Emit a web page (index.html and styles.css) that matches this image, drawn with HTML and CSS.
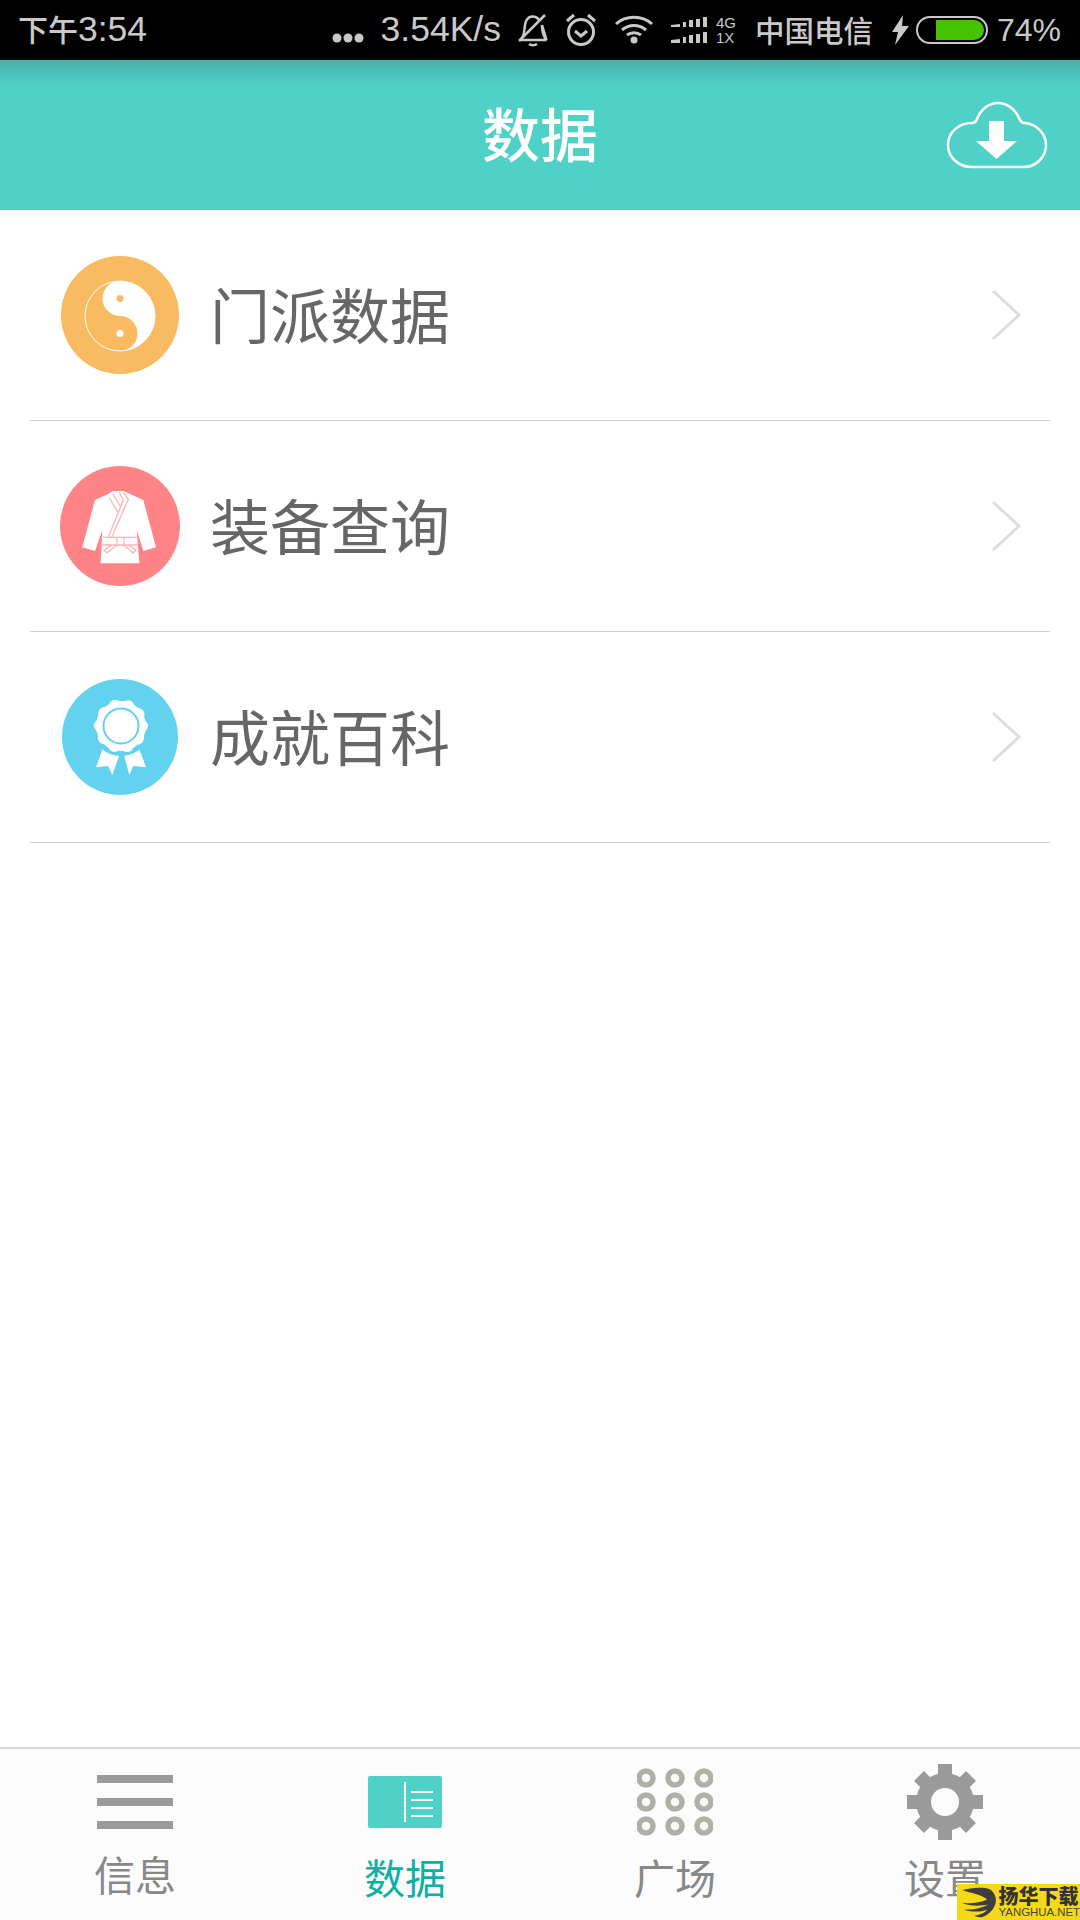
FILE: index.html
```html
<!DOCTYPE html>
<html lang="zh-CN">
<head>
    <meta charset="UTF-8">
    <meta name="viewport" content="width=device-width, initial-scale=1.0">
    <title>数据</title>
    <link rel="stylesheet" href="styles.css">
</head>
<body>

    <!-- 状态栏 -->
    <div class="status-bar">
        <span class="clock"><span class="clock-cn">下午</span>3:54</span>
        <div class="status-right">
            <svg class="st-dots" width="32" height="10" viewBox="0 0 32 10"><circle cx="5" cy="5" r="4.500"/><circle cx="16" cy="5" r="4.500"/><circle cx="27" cy="5" r="4.500"/></svg>
            <span class="speed">3.54K/s</span>
            <svg class="st-bell" width="32" height="34" viewBox="0 0 32 34"><path d="M3 27c3-2 4-5 4.500-11 .5-8 3-12.500 8-12.500 3 0 5 1 6.500 3.500M25 12c0 6 1 11 4.500 15zM3 27h26.500M12 31c2 1.500 6 1.500 8 0" fill="none" stroke-width="2.500"/><path d="M2 28 28 2" fill="none" stroke-width="2.500"/></svg>
            <svg class="st-alarm" width="32" height="34" viewBox="0 0 32 34"><circle cx="16" cy="19" r="12.500" fill="none"/><path d="M10 18l6 5 6-5M2 8l7-6M30 8l-7-6" fill="none"/></svg>
            <svg class="st-wifi" width="38" height="30" viewBox="0 0 38 30"><path d="M1 9c10-9 26-9 36 0M7 15c7-6 17-6 24 0M12 20c4-3 10-3 14 0" fill="none"/><circle class="solid" cx="19" cy="25" r="3.500"/></svg>
            <svg class="st-signal" width="37" height="28" viewBox="0 0 37 28"><path class="solid" d="M0 9l9-1v3H0zM12 6h3v5h-3zM18 4h4v7h-4zM25 3h4v8h-4zM32 1h4v10h-4zM0 24l9-1v4H0zM12 21h3v6h-3zM18 19h4v8h-4zM25 18h4v9h-4zM32 16h4v11h-4z"/></svg>
            <span class="net-type"><span>4G</span><span>1X</span></span>
            <span class="carrier">中国电信</span>
            <svg class="st-bolt" width="17" height="30" viewBox="0 0 17 30"><path class="solid" d="M11 0 0 17h6L3 30 17 11h-7z"/></svg>
            <span class="battery"><span class="battery-level"></span></span>
            <span class="percent">74%</span>
        </div>
    </div>

    <!-- 标题栏 -->
    <div class="header">
        <h1>数据</h1>
        <svg class="cloud" width="102" height="68" viewBox="0 0 102 68">
            <path d="M26 66C12 66 2 56 2 44c0-13 11-22 24-22 3 0 4-1 5-4C35 8 43 2 52 2c9 0 17 6 21 15 1 3 3 5 6 5 11 1 21 10 21 22 0 12-10 22-22 22z" fill="none" stroke="#fff" stroke-width="2.500"/>
            <path d="M43 20h15v20h13L50.500 58 30 40h13z" fill="#fff"/>
        </svg>
    </div>

    <!-- 列表 -->
    <div class="list">
        <div class="row">
            <svg class="row-icon" width="120" height="120" viewBox="0 0 120 120">
                <circle cx="60" cy="60" r="59" fill="#f9bb62"/>
                <circle cx="60" cy="61" r="35" fill="none" stroke="#fff" stroke-width="1"/>
                <path d="M60 26a17.500 17.500 0 0 0 0 35 17.500 17.500 0 0 1 0 35 35 35 0 0 0 0-70z" fill="#fff"/>
                <circle cx="60" cy="43.500" r="3.500" fill="#f9bb62"/>
                <circle cx="60" cy="78.500" r="3.500" fill="#fff"/>
            </svg>
            <span class="row-label">门派数据</span>
            <svg class="chevron" width="32" height="52" viewBox="0 0 32 52"><path d="M3 2l26 24L3 50" fill="none" stroke="#ddd" stroke-width="3"/></svg>
        </div>
        <div class="row">
            <svg class="row-icon" width="120" height="120" viewBox="0 0 120 120">
                <circle cx="60" cy="60" r="60" fill="#ff8488"/>
                <path d="M52.700 25h10.600l5 2.300L83.300 34 96 81.300 83.300 85l-6.600-21 2.600 33.300H40.700L42.300 64 35 85l-12.700-3.700L35 34l13.300-6z" fill="#fff"/>
                <path d="M63.300 26.300l5 7-16.600 38M59.300 26.300l4 7.700-15 37.300M49.300 31.700l9 15.600M52.700 28l8.300 13.300M43 71.300h34M42 79h36M57 71.300v8M64 71.300v8M57 79 47 87l-3-3 8-5M64 79l9 8 3-3-8-5" fill="none" stroke="#ffb4b6" stroke-width="1.300"/>
            </svg>
            <span class="row-label">装备查询</span>
            <svg class="chevron" width="32" height="52" viewBox="0 0 32 52"><path d="M3 2l26 24L3 50" fill="none" stroke="#ddd" stroke-width="3"/></svg>
        </div>
        <div class="row">
            <svg class="row-icon" width="120" height="120" viewBox="0 0 120 120">
                <circle cx="60" cy="60" r="58" fill="#62d2ee"/>
                <path d="M43.300 70.300 60 76.300 52.300 98l-4-9L36 90.300zM64 78l14.300-8.300L86 90.300 73.300 89l-4 9z" fill="#fff"/>
                <circle cx="61" cy="49" r="30" fill="#62d2ee"/>
                <circle cx="61" cy="49" r="20.500" fill="none" stroke="#fff" stroke-width="13" stroke-linecap="round" stroke-dasharray="0 12.880"/>
                <circle cx="61" cy="49" r="25" fill="#fff"/>
                <circle cx="61" cy="49" r="17.500" fill="#fff" stroke="#62d2ee" stroke-width="2"/>
            </svg>
            <span class="row-label">成就百科</span>
            <svg class="chevron" width="32" height="52" viewBox="0 0 32 52"><path d="M3 2l26 24L3 50" fill="none" stroke="#ddd" stroke-width="3"/></svg>
        </div>
    </div>

    <!-- 底部导航 -->
    <div class="tabs">
        <div class="tab tab-info">
            <span class="tab-icon">
                <svg width="76" height="54" viewBox="0 0 76 54"><path d="M0 0h76v8H0zM0 23h76v8H0zM0 46h76v8H0z" fill="#9a9a9a"/></svg>
            </span>
            <span class="tab-label">信息</span>
        </div>
        <div class="tab active">
            <span class="tab-icon">
                <svg width="74" height="52" viewBox="0 0 74 52"><rect width="74" height="52" rx="2" fill="#4fd1c8"/><path d="M37 6v40M43 16h22M43 24h22M43 32h22M43 40h22" stroke="#fff" stroke-width="2"/></svg>
            </span>
            <span class="tab-label">数据</span>
        </div>
        <div class="tab">
            <span class="tab-icon">
                <svg width="76" height="68" viewBox="0 0 76 68" fill="none" stroke="#afb0aa" stroke-width="5.500">
                    <circle cx="9" cy="10" r="7"/><circle cx="38" cy="10" r="7"/><circle cx="67" cy="10" r="7"/>
                    <circle cx="9" cy="34" r="7"/><circle cx="38" cy="34" r="7"/><circle cx="67" cy="34" r="7"/>
                    <circle cx="9" cy="58" r="7"/><circle cx="38" cy="58" r="7"/><circle cx="67" cy="58" r="7"/>
                </svg>
            </span>
            <span class="tab-label">广场</span>
        </div>
        <div class="tab">
            <span class="tab-icon">
                <svg width="76" height="76" viewBox="0 0 76 76">
                    <path d="M38 0v76M0 38h76M12 12l52 52M64 12 12 64" stroke="#9a9a9a" stroke-width="14"/>
                    <circle cx="38" cy="38" r="29" fill="#9a9a9a"/>
                    <circle cx="38" cy="38" r="14" fill="#fcfcfc"/>
                </svg>
            </span>
            <span class="tab-label">设置</span>
        </div>
    </div>

    <!-- 水印 -->
    <div class="watermark">
        <svg width="38" height="36" viewBox="0 0 44 36"><path d="M4 4c10-3 24-4 32-1 6 4 8 10 7 16-2 8-8 14-16 17-4 0-6-1-9-2 6-1 12-3 15-7-8 3-18 3-27 0 9 0 20-1 28-6-9 2-22 2-31-2 10 1 22 0 30-4C26 9 14 8 4 4z" fill="#3d3d42"/></svg>
        <div class="wm-text">
            <span class="wm-cn">扬华下载</span>
            <span class="wm-en">YANGHUA.NET</span>
        </div>
    </div>

</body>
</html>
```

FILE: styles.css
```css
* {
    box-sizing: border-box;
}

body {
    font-family: "Noto Sans CJK SC", "Noto Sans", sans-serif;
    background-color: #fff;
    margin: 0;
    padding: 0;
    width: 1080px;
    height: 1920px;
    display: flex;
    flex-direction: column;
    position: relative;
    overflow: hidden;
}

.status-bar {
    height: 60px;
    flex: none;
    background-color: #000;
    color: #c9c9c9;
    font-family: "Liberation Sans", "Noto Sans CJK SC", sans-serif;
    display: flex;
    align-items: center;
    justify-content: space-between;
    padding: 0 19px 0 18px;
}

.clock {
    font-size: 35.500px;
    line-height: 1;
}

.clock-cn {
    font-family: "Noto Sans CJK SC", sans-serif;
    font-size: 30px;
    font-weight: 500;
}

.status-right {
    display: flex;
    align-items: center;
}

.status-right svg {
    stroke: #c9c9c9;
    stroke-width: 3;
    fill: #c9c9c9;
    flex: none;
}

.status-right svg .solid {
    stroke: none;
}

.st-dots {
    stroke: none !important;
    margin-top: 16px;
}

.speed {
    font-size: 35.500px;
    line-height: 1;
    margin-left: 17px;
}

.st-bell {
    margin-left: 16px;
}

.st-alarm {
    margin-left: 16px;
}

.st-wifi {
    margin-left: 18px;
}

.st-signal {
    margin-left: 18px;
}

.net-type {
    display: flex;
    flex-direction: column;
    font-size: 15px;
    line-height: 15px;
    margin-left: 8px;
    width: 22px;
}

.carrier {
    font-family: "Noto Sans CJK SC", sans-serif;
    font-weight: 500;
    font-size: 29.500px;
    line-height: 1;
    margin-left: 17px;
}

.st-bolt {
    margin-left: 19px;
}

.battery {
    width: 72px;
    height: 28px;
    margin-left: 7px;
    border: 2px solid #c9c9c9;
    border-radius: 14px;
    padding: 2px;
    display: flex;
    justify-content: flex-end;
}

.battery-level {
    width: 48px;
    background-color: #46c300;
    border-radius: 0 10px 10px 0;
}

.percent {
    font-size: 32px;
    line-height: 1;
    margin-left: 9px;
}

.header {
    height: 150px;
    flex: none;
    background: linear-gradient(to bottom, #46b2aa 0, #4fd1c8 28px);
    display: flex;
    align-items: center;
    justify-content: center;
    position: relative;
}

.header h1 {
    margin: 0;
    color: #fff;
    font-size: 58px;
    font-weight: 500;
    line-height: 1;
    position: relative;
    top: -3px;
}

.cloud {
    position: absolute;
    right: 32px;
    top: 41px;
}

.list {
    flex: 1;
    padding: 0 30px;
}

.row {
    height: 211px;
    border-bottom: 1.500px solid #cfcfcf;
    padding: 0 30px;
    display: flex;
    align-items: center;
}

.row-icon {
    flex: none;
}

.row-label {
    margin-left: 30px;
    flex: 1;
    font-size: 60px;
    line-height: 1;
    color: #666;
    position: relative;
    top: -2px;
}

.chevron {
    flex: none;
    margin-right: -2px;
}

.tabs {
    height: 173px;
    flex: none;
    background-color: #fcfcfc;
    border-top: 2px solid #d8d8d8;
    display: flex;
}

.tab {
    flex: 1;
    display: flex;
    flex-direction: column;
    align-items: center;
    color: #888;
}

.tab-icon {
    height: 98px;
    padding-top: 8px;
    display: flex;
    align-items: center;
    justify-content: center;
}

.tab-label {
    font-size: 41px;
    line-height: 1;
    margin-top: 9px;
}

.tab-info .tab-label {
    margin-top: 6px;
}

.tab.active {
    color: #0db0a2;
}

.watermark {
    position: absolute;
    right: 0;
    bottom: 0;
    width: 123px;
    height: 36px;
    background-color: #f5d916;
    display: flex;
    align-items: center;
    padding-left: 2px;
}

.wm-text {
    display: flex;
    flex-direction: column;
    margin-left: 2px;
}

.wm-cn {
    font-size: 20px;
    line-height: 20px;
    font-weight: 900;
    color: #333;
    white-space: nowrap;
}

.wm-en {
    font-family: "Liberation Sans", sans-serif;
    font-size: 11.400px;
    line-height: 12px;
    color: #444;
    white-space: nowrap;
}
```
